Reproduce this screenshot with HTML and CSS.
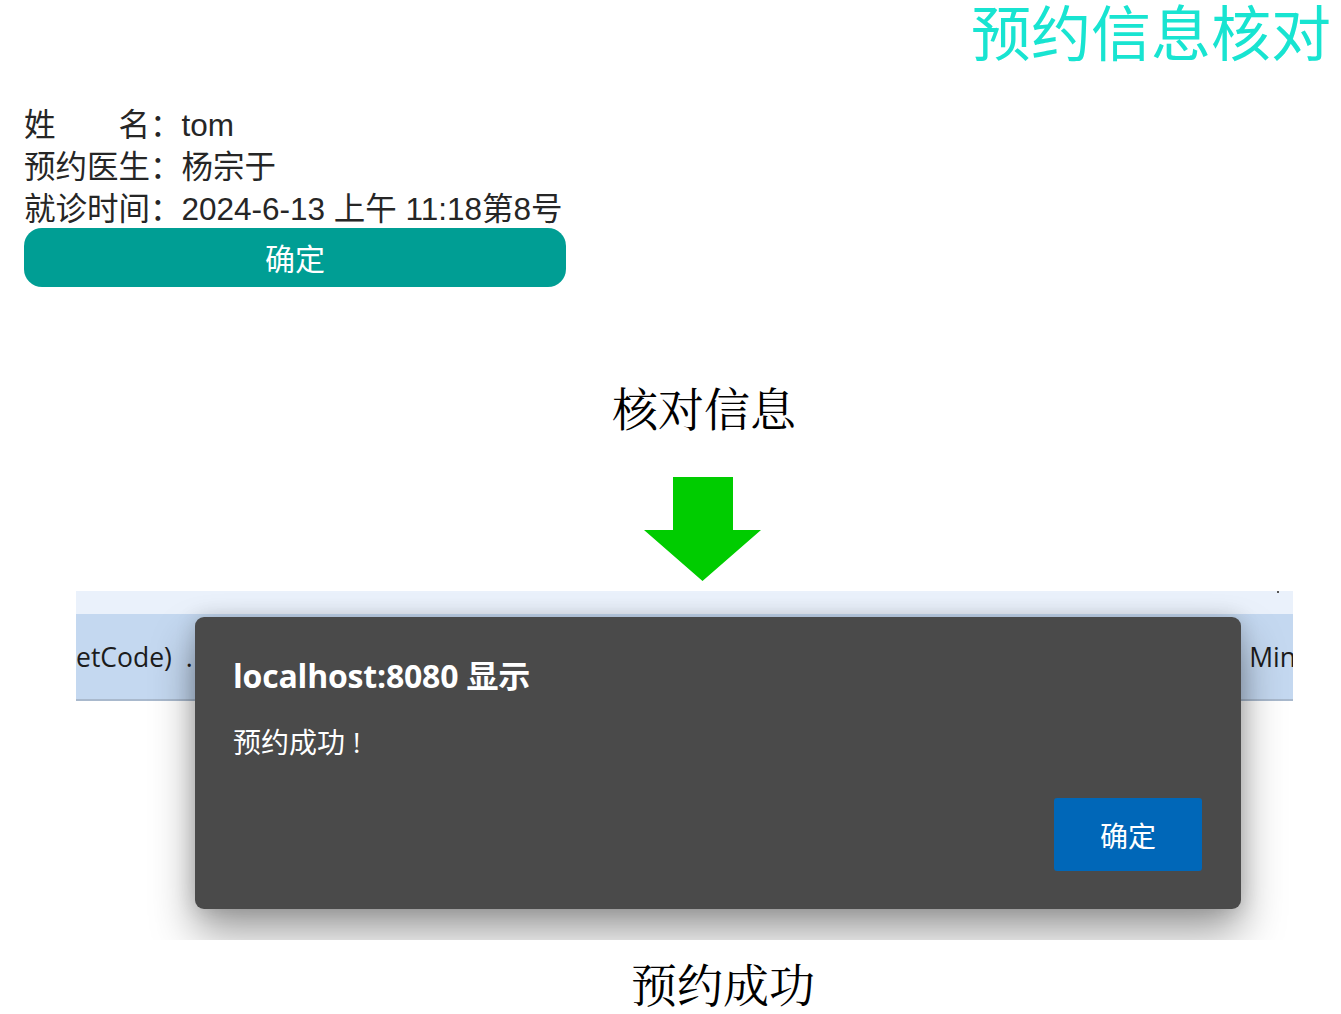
FILE: index.html
```html
<!DOCTYPE html>
<html lang="zh-CN">
<head>
<meta charset="utf-8">
<title>预约信息核对</title>
<link rel="stylesheet" href="styles.css">
</head>
<body>
<div class="page">
  <header class="top">
    <h1 class="title">预约信息核对</h1>
  </header>
  <section class="info">
    <div class="row">姓&emsp;&emsp;名：tom</div>
    <div class="row">预约医生：杨宗于</div>
    <div class="row">就诊时间：2024-6-13 上午 11:18第8号</div>
  </section>
  <button class="confirm">确定</button>

  <div class="caption caption-check">核对信息</div>

  <div class="arrow">
    <svg width="117" height="104" viewBox="0 0 117 104" aria-hidden="true">
      <polygon points="29,0 89,0 89,53 117,53 58.5,104 0,53 29,53" fill="#00cc00"/>
    </svg>
  </div>

  <div class="shot">
    <div class="strip"><span class="dot"></span></div>
    <div class="band">
      <span class="band-left">etCode)&nbsp;&nbsp;.</span>
      <span class="band-right">Min</span>
    </div>
    <div class="dialog">
      <div class="dlg-title">localhost:8080 显示</div>
      <div class="dlg-msg">预约成功<span class="bang">!</span></div>
      <div class="dlg-actions">
        <button class="dlg-btn">确定</button>
      </div>
    </div>
  </div>

  <div class="caption caption-done">预约成功</div>
</div>
</body>
</html>
```

FILE: styles.css
```css
html, body {
  margin: 0;
  padding: 0;
  background: #ffffff;
}

.page {
  width: 1341px;
  min-height: 1014px;
  display: flex;
  flex-direction: column;
  font-family: "Liberation Sans", "Noto Sans CJK SC", sans-serif;
}

.top {
  display: flex;
  justify-content: flex-end;
  padding-right: 10px;
}

.title {
  margin: 0;
  font-weight: 400;
  font-size: 60px;
  line-height: 60px;
  padding-bottom: 4px;
  color: #18e4d1;
  font-family: "Noto Sans CJK SC", sans-serif;
  white-space: nowrap;
}

.info {
  margin-top: 40px;
  margin-left: 24px;
  font-size: 31.5px;
  line-height: 42px;
  color: #262626;
}

.row {
  white-space: nowrap;
}

.confirm {
  margin: -2px 0 0 24px;
  width: 542px;
  height: 59px;
  border: none;
  border-radius: 18px;
  background: #009e94;
  color: #ffffff;
  font-family: "Noto Sans CJK SC", sans-serif;
  font-size: 30px;
  line-height: 59px;
  padding: 0;
}

.caption {
  font-family: "Liberation Serif", "Noto Serif CJK SC", serif;
  font-size: 46px;
  line-height: 56px;
  color: #000000;
  white-space: nowrap;
}

.caption-check {
  margin-top: 96px;
  margin-left: 612px;
}

.arrow {
  margin-top: 38px;
  margin-left: 644px;
  height: 104px;
}

.arrow svg {
  display: block;
}

.shot {
  position: relative;
  margin-top: 10px;
  margin-left: 76px;
  width: 1217px;
  height: 349px;
  overflow: hidden;
  background: #ffffff;
}

.strip {
  position: relative;
  height: 23px;
  background: #eaf1fb;
}

.dot {
  position: absolute;
  left: 1201px;
  top: 0;
  width: 2px;
  height: 2px;
  background: #555;
}

.band {
  height: 85px;
  background: #c4d8f0;
  border-bottom: 2px solid #a9b9cd;
  display: flex;
  justify-content: space-between;
  align-items: center;
  font-family: "Open Sans", "Noto Sans", sans-serif;
  font-size: 26.5px;
  color: #1c1c1c;
  white-space: nowrap;
}

.band-left {
  margin-left: 0;
}

.band-right {
  margin-right: -3px;
}

.dialog {
  position: absolute;
  left: 119px;
  top: 26px;
  width: 1046px;
  height: 292px;
  box-sizing: border-box;
  padding: 40px 39px 0 38px;
  background: #4a4a4a;
  border-radius: 9px;
  box-shadow: 0 24px 44px rgba(0, 0, 0, 0.38), 0 0 20px rgba(0, 0, 0, 0.16);
  color: #ffffff;
  display: flex;
  flex-direction: column;
}

.dlg-title {
  font-family: "Open Sans", "Noto Sans CJK SC", sans-serif;
  font-weight: 700;
  font-size: 32px;
  line-height: 38px;
  letter-spacing: -0.2px;
}

.dlg-msg {
  margin-top: 28px;
  font-family: "Noto Sans CJK SC", sans-serif;
  font-size: 28px;
  line-height: 36px;
}

.bang {
  margin-left: 8px;
  font-family: "Open Sans", sans-serif;
}

.dlg-actions {
  display: flex;
  justify-content: flex-end;
  margin-top: 38px;
}

.dlg-btn {
  width: 148px;
  height: 73px;
  border: none;
  border-radius: 3px;
  background: #0067b8;
  color: #ffffff;
  font-family: "Noto Sans CJK SC", sans-serif;
  font-size: 28px;
  padding: 0;
}

.caption-done {
  margin-top: 19px;
  margin-left: 631px;
}
```
